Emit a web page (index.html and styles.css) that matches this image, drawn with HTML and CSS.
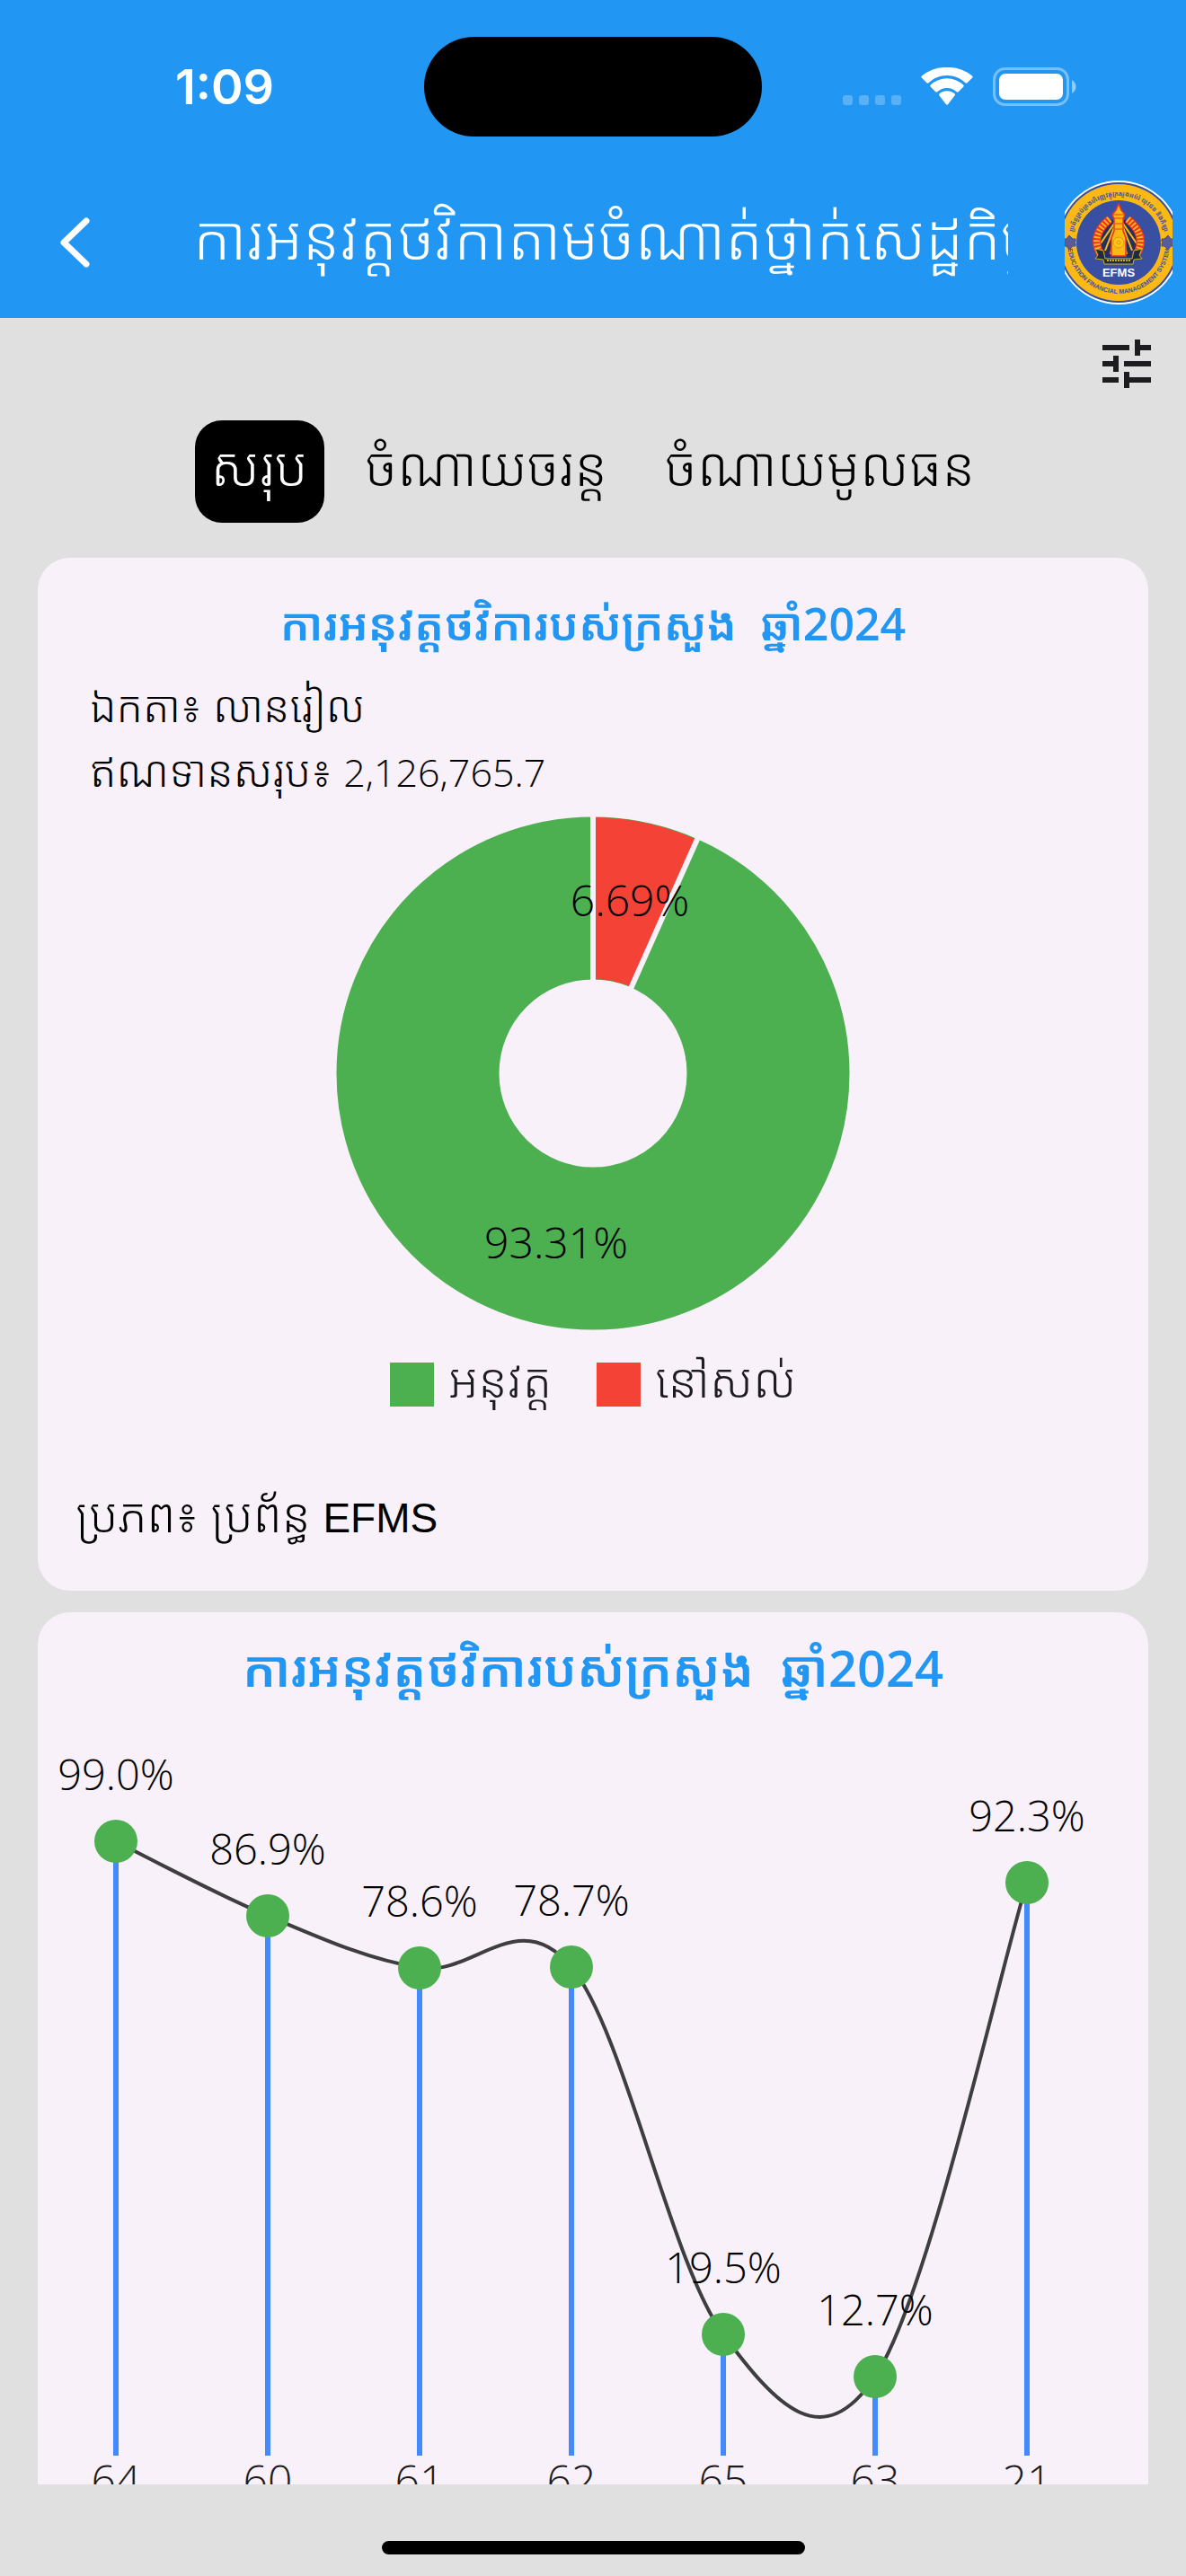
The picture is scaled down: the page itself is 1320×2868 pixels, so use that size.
FILE: index.html
```
<!DOCTYPE html>
<html lang="km">
<head>
    <meta charset="UTF-8">
    <meta name="viewport" content="width=device-width, initial-scale=1.0">
    <title>EFMS</title>
    <link rel="stylesheet" href="styles.css">
</head>
<body>
    <div class="top">
        <div class="status-bar">
            <span class="time">1:09</span>
            <div class="island"></div>
            <div class="status-icons">
                <svg width="65" height="43" viewBox="0 0 65 43" fill="#fff" fill-opacity=".25">
                    <rect x="0" y="31" width="11" height="11" rx="3"/>
                    <rect x="18" y="31" width="11" height="11" rx="3"/>
                    <rect x="36" y="31" width="11" height="11" rx="3"/>
                    <rect x="54" y="31" width="11" height="11" rx="3"/>
                </svg>
                <svg width="58" height="43" viewBox="0 0 58 43" fill="#fff">
                    <path d="M29 9c8 0 15 3 20.500 8.300a1.500 1.500 0 0 0 2 0l5.500-5.500a1.500 1.500 0 0 0 0-2.200A41 41 0 0 0 29 0 41 41 0 0 0 1 9.600a1.500 1.500 0 0 0 0 2.200l5.500 5.500a1.500 1.500 0 0 0 2 0C14 12 21 9 29 9z"/>
                    <path d="M29 23c4 0 7.800 1.500 10.700 4.200a1.500 1.500 0 0 0 2 0l5.500-5.500a1.500 1.500 0 0 0 0-2.200 26.500 26.500 0 0 0-36.400 0 1.500 1.500 0 0 0 0 2.200l5.500 5.500a1.500 1.500 0 0 0 2 0C21.200 24.500 25 23 29 23z"/>
                    <path d="M37.500 31.500a1.500 1.500 0 0 0 0-2.200 13 13 0 0 0-17 0 1.500 1.500 0 0 0 0 2.200l7.500 9.800a1.500 1.500 0 0 0 2 0z"/>
                </svg>
                <svg width="93" height="43" viewBox="0 0 93 43">
                    <rect x="1.500" y="1.500" width="82" height="40" rx="12" fill="none" stroke="#fff" stroke-opacity=".4" stroke-width="3"/>
                    <rect x="7" y="7" width="71" height="29" rx="7" fill="#fff"/>
                    <path d="M88 14c6 3 6 12 0 15z" fill="#fff" fill-opacity=".5"/>
                </svg>
            </div>
        </div>
        <header class="app-bar">
            <button class="back" aria-label="Back">
                <svg width="33" height="56" viewBox="0 0 33 56" fill="none" stroke="#fff" stroke-width="7" stroke-linecap="round" stroke-linejoin="round">
                    <path d="M29 4 4 28l25 24"/>
                </svg>
            </button>
            <h1>ការអនុវត្តថវិកាតាមចំណាត់ថ្នាក់សេដ្ឋកិច្ច</h1>
            <svg class="logo" viewBox="9 0 120 138">
                <defs>
                    <path id="arc-top" d="M17 69a52 52 0 0 1 104 0"/>
                    <path id="arc-bottom" d="M12 69a57 57 0 0 0 114 0"/>
                </defs>
                <circle cx="69" cy="69" r="69" fill="#fff"/>
                <circle cx="69" cy="69" r="67" fill="#3950a2"/>
                <circle cx="69" cy="69" r="65" fill="#fdb913"/>
                <circle cx="69" cy="69" r="47" fill="#3950a2"/>
                <text class="logo-ring"><textPath href="#arc-top" startOffset="50%">ប្រព័ន្ធគ្រប់គ្រងហិរញ្ញវត្ថុក្រសួងអប់រំ យុវជន និងកីឡា</textPath></text>
                <text class="logo-ring"><textPath href="#arc-bottom" startOffset="50%">EDUCATION FINANCIAL MANAGEMENT SYSTEM</textPath></text>
                <path d="M14 61l4 4h3v3l-2 1 2 1v3h-3l-4 4-3-4H9v-8h2zM124 61l3 4h3v8h-3l-3 4-4-4h-3v-3l2-1-2-1v-3h3z" fill="#5a5c96" stroke="#3950a2"/>
                <path d="M61 44 47 60l-2 16 8 10h32l8-10-2-16-14-16z" fill="#23305f"/>
                <path d="M66 45 49 70M66 47 54 78M67 50l-7 32M72 45l17 25M72 47l12 31M71 50l7 32" stroke="#fdb913" stroke-width="2"/>
                <path d="M59 43Q36 62 50 84M79 43q23 19 9 41" fill="none" stroke="#ed3424" stroke-width="9"/>
                <path d="M59 43Q36 62 50 84M79 43q23 19 9 41" fill="none" stroke="#fdb51a" stroke-width="7" stroke-dasharray="2 2"/>
                <path d="M69 26l3 7 4 5-2 5v13l3 8v20H61V64l3-8V43l-2-5 4-5z" fill="#fdb913" stroke="#ed3424" stroke-width="1.500"/>
                <path d="M63 38h12M63 42h12M65 48h8M65 54h8" stroke="#ed3424"/>
                <circle cx="69" cy="69" r="6" fill="#fdc51a" stroke="#d99a10"/>
                <circle cx="69" cy="69" r="2" fill="none" stroke="#d99a10"/>
                <path d="M43 76l9 2 2 9h30l2-9 9-2-3 7 3 4-9 1-1 5H53l-1-5-9-1 3-4z" fill="#1d2a44" stroke="#d0ad20"/>
                <path d="M56 89h26" stroke="#d0ad20" stroke-width="2" stroke-dasharray="2 1"/>
                <text class="logo-name" x="69" y="107">EFMS</text>
            </svg>
        </header>
    </div>

    <main>
        <div class="toolbar">
            <button class="filter" aria-label="Filter">
                <svg width="54" height="54" viewBox="3 3 18 18" fill="#1d1d1f">
                    <path d="M3 17v2h6v-2H3zM3 5v2h10V5H3zm10 16v-2h8v-2h-8v-2h-2v6h2zM7 9v2H3v2h4v2h2V9H7zm14 4v-2H11v2h10zm-6-4h2V7h4V5h-4V3h-2v6z"/>
                </svg>
            </button>
        </div>
        <nav class="tabs">
            <button class="tab active">សរុប</button>
            <button class="tab">ចំណាយចរន្ត</button>
            <button class="tab">ចំណាយមូលធន</button>
        </nav>

        <section class="card summary">
            <h2>ការអនុវត្តថវិការបស់ក្រសួង&nbsp; ឆ្នាំ2024</h2>
            <div class="facts">
                <p>ឯកតា៖ លានរៀល</p>
                <p>ឥណទានសរុប៖ <span class="amount">2,126,765.7</span></p>
            </div>
            <svg class="donut" viewBox="0 0 572 572">
                <circle cx="286" cy="286" r="195" fill="none" stroke="#4caf50" stroke-width="181"/>
                <path d="M286 1a285 285 0 0 1 116 25L329 190a105 105 0 0 0-43-9z" fill="#f44336"/>
                <path d="M286 0v184M404 21 327 194" stroke="#f8f1f9" stroke-width="6"/>
                <text x="327" y="111">6.69%</text>
                <text x="245" y="492">93.31%</text>
            </svg>
            <div class="legend">
                <span class="key"><i class="swatch used"></i><span>អនុវត្ត</span></span>
                <span class="key"><i class="swatch left"></i><span>នៅសល់</span></span>
            </div>
            <p class="source">ប្រភព៖ ប្រព័ន្ធ <span class="system">EFMS</span></p>
        </section>

        <section class="card trend">
            <h2>ការអនុវត្តថវិការបស់ក្រសួង&nbsp; ឆ្នាំ2024</h2>
            <svg class="line-chart" viewBox="0 0 1236 900">
                <g class="values">
                    <text x="87" y="92">99.0%</text>
                    <text x="256" y="175">86.9%</text>
                    <text x="425" y="233">78.6%</text>
                    <text x="594" y="232">78.7%</text>
                    <text x="763" y="641">19.5%</text>
                    <text x="932" y="688">12.7%</text>
                    <text x="1101" y="138">92.3%</text>
                </g>
                <path d="M87 149V833M256 232V833M425 290V833M594 289V833M763 698V833M932 745V833M1101 195V833" stroke="#448aff" stroke-width="6"/>
                <path d="M87 149C87 149 197 207 256 232C315 257 366 280 425 290C484 300 535 218 594 289C653 360 704 618 763 698C822 778 873 833 932 745C991 657 1071 291 1101 195" fill="none" stroke="#000" stroke-opacity=".75" stroke-width="4"/>
                <g fill="#4caf50">
                    <circle cx="87" cy="149" r="24"/>
                    <circle cx="256" cy="232" r="24"/>
                    <circle cx="425" cy="290" r="24"/>
                    <circle cx="594" cy="289" r="24"/>
                    <circle cx="763" cy="698" r="24"/>
                    <circle cx="932" cy="745" r="24"/>
                    <circle cx="1101" cy="195" r="24"/>
                </g>
                <g class="axis">
                    <text x="87" y="878">64</text>
                    <text x="256" y="878">60</text>
                    <text x="425" y="878">61</text>
                    <text x="594" y="878">62</text>
                    <text x="763" y="878">65</text>
                    <text x="932" y="878">63</text>
                    <text x="1101" y="878">21</text>
                </g>
            </svg>
        </section>
    </main>

    <div class="home-area"><div class="home-bar"></div></div>
</body>
</html>
```
FILE: styles.css
```
* {
    box-sizing: border-box;
}
body {
    margin: 0;
    height: 100vh;
    display: flex;
    flex-direction: column;
    background: #e0e0e0;
    color: #000;
    font-family: "Open Sans", "Noto Sans Khmer", "Khmer OS", sans-serif;
    font-size: 48px;
    font-weight: 300;
}
h1, h2, p {
    margin: 0;
}
button {
    border: 0;
    padding: 0;
    background: none;
    color: inherit;
    font: inherit;
}
svg {
    display: block;
}
.top {
    flex: none;
    background: #2196f3;
    color: #fff;
}
.status-bar {
    display: grid;
    grid-template-columns: 1fr 376px 1fr;
    align-items: center;
    height: 193px;
}
.time {
    padding-left: 28px;
    text-align: center;
    font-family: Inter, sans-serif;
    font-size: 54px;
    font-weight: 600;
}
.island {
    height: 111px;
    border-radius: 56px;
    background: #000;
}
.status-icons {
    display: flex;
    gap: 22px;
    justify-content: flex-end;
    padding-right: 122px;
}
.app-bar {
    display: flex;
    align-items: center;
    height: 161px;
    padding: 0 15px 8px 67px;
}
.back {
    flex: none;
    width: 148px;
}
.app-bar h1 {
    flex: 1;
    margin-right: 63px;
    padding-bottom: 14px;
    overflow: hidden;
    white-space: nowrap;
    font-size: 68px;
    font-weight: 300;
    line-height: 130px;
}
.logo {
    flex: none;
    width: 120px;
    height: 138px;
}
.logo-ring {
    fill: #3950a2;
    font-family: "Liberation Sans", "Noto Sans Khmer", sans-serif;
    font-size: 7px;
    font-weight: bold;
    text-anchor: middle;
}
.logo-name {
    fill: #fff;
    font-family: "Liberation Sans", sans-serif;
    font-size: 13px;
    font-weight: bold;
    text-anchor: middle;
}
main {
    flex: 1;
    min-height: 0;
    overflow: hidden;
    padding: 24px 42px 0;
}
.toolbar {
    display: flex;
    justify-content: flex-end;
    margin-right: -3px;
}
.tabs {
    display: flex;
    justify-content: center;
    gap: 28px;
    margin: 36px 0 39px;
}
.tab {
    height: 114px;
    padding: 0 18px 14px;
    border-radius: 30px;
    font-size: 60px;
    line-height: 100px;
    white-space: nowrap;
}
.tab.active {
    background: #000;
    color: #fff;
}
.card {
    border-radius: 36px;
    background: #f8f1f9;
}
.card h2 {
    color: #2196f3;
    text-align: center;
    white-space: nowrap;
    font-size: 50px;
    font-weight: 600;
}
.summary {
    margin-bottom: 24px;
    padding: 28px 42px 40px;
}
.summary h2 {
    line-height: 90px;
}
.facts {
    padding: 11px 16px 15px;
    line-height: 72px;
}
.amount {
    font-size: 43px;
    line-height: 1;
}
.donut {
    width: 572px;
    margin: 0 auto;
}
.donut text, .line-chart text {
    text-anchor: middle;
}
.donut text {
    font-size: 48px;
}
.legend {
    display: flex;
    justify-content: center;
    gap: 50px;
    margin: 20px 0 60px;
    color: #1d1b20;
    font-size: 53px;
    line-height: 70px;
}
.key {
    display: flex;
    align-items: center;
    gap: 16px;
}
.key span {
    padding-bottom: 10px;
}
.swatch {
    width: 49px;
    height: 49px;
}
.used {
    background: #4caf50;
}
.left {
    background: #f44336;
}
.source {
    font-size: 52px;
    line-height: 90px;
}
.system {
    font-family: "Liberation Sans", sans-serif;
    font-size: 46px;
    line-height: 1;
}
.trend h2 {
    padding-top: 16px;
    font-size: 56px;
    line-height: 90px;
}
.line-chart {
    width: 100%;
}
.values {
    font-size: 47px;
}
.axis {
    fill: #1d1b20;
    font-size: 48px;
}
.home-area {
    flex: none;
    display: flex;
    justify-content: center;
    align-items: flex-end;
    height: 102px;
    padding-bottom: 24px;
}
.home-bar {
    width: 471px;
    height: 15px;
    border-radius: 8px;
    background: #000;
}
```
